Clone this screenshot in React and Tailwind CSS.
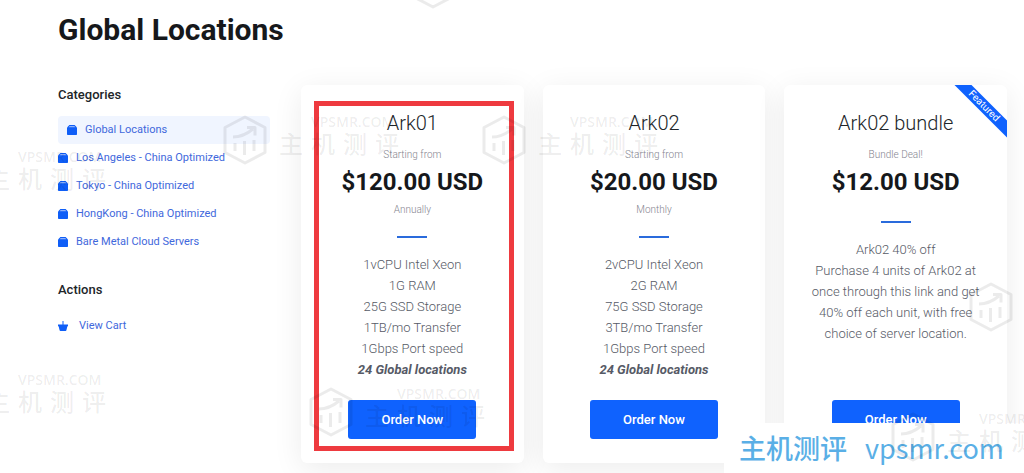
import React from 'react';
import clsx from 'clsx';

const categories = [
    { name: 'Global Locations', active: true },
    { name: 'Los Angeles - China Optimized' },
    { name: 'Tokyo - China Optimized' },
    { name: 'HongKong - China Optimized' },
    { name: 'Bare Metal Cloud Servers' },
];

const plans = [
    {
        name: 'Ark01',
        intro: 'Starting from',
        price: '$120.00 USD',
        cycle: 'Annually',
        features: ['1vCPU Intel Xeon', '1G RAM', '25G SSD Storage', '1TB/mo Transfer', '1Gbps Port speed'],
        note: '24 Global locations',
        marked: true,
    },
    {
        name: 'Ark02',
        intro: 'Starting from',
        price: '$20.00 USD',
        cycle: 'Monthly',
        features: ['2vCPU Intel Xeon', '2G RAM', '75G SSD Storage', '3TB/mo Transfer', '1Gbps Port speed'],
        note: '24 Global locations',
    },
    {
        name: 'Ark02 bundle',
        intro: 'Bundle Deal!',
        price: '$12.00 USD',
        features: ['Ark02 40% off', 'Purchase 4 units of Ark02 at once through this link and get 40% off each unit, with free choice of server location.'],
        featured: true,
    },
];

const watermarks = [
    'left-[410px] -top-[41px]',
    'left-[222px] top-[115px]',
    'left-[481px] top-[115px]',
    '-left-[71px] top-[150px]',
    '-left-[71px] top-[373px]',
    'left-[308px] top-[387px]',
    'left-[968px] top-[282px]',
    'left-[890px] top-[412px]',
];

const BoxIcon = () => (
    <svg viewBox="0 0 10 10" className="w-2.5 h-2.5 shrink-0" aria-hidden="true">
        <path d="M2.4 0h5.200L10 2.400V9.200a.8.8 0 0 1-.8.8H.8a.8.8 0 0 1-.8-.8V2.400z" fill="#0f5ef7" />
        <path d="M2.600 1.100h4.800l.9 1.100H1.700z" fill="#8db0fb" />
    </svg>
);

const BasketIcon = () => (
    <svg viewBox="0 0 10 10" className="w-2.5 h-2.5 shrink-0" aria-hidden="true">
        <path d="M4.500 0h1v4h-1z" fill="#0f5ef7" />
        <path d="M0 3.600h10v1.600h-.6L8.400 9.300a.9.9 0 0 1-.9.7h-5a.9.9 0 0 1-.9-.7L.6 5.200H0z" fill="#0f5ef7" />
    </svg>
);

const Watermark = ({ position }) => (
    <div className={clsx('absolute flex items-start gap-[11px] w-max text-black/8', position)}>
        <svg viewBox="0 0 46 50" className="w-[46px] h-[50px]" fill="none" stroke="currentColor" strokeWidth="3" strokeLinejoin="round">
            <path
                d="M23 2 43 12.500V37.500L23 48 3 37.500V12.500z M11 22c8 0 14-3 20-8M25 12.500h8v8M13 28v8M22.500 26v14M32 25v11"
            />
        </svg>
        <div>
            <p className="pl-8 text-sm leading-3.5 font-semibold font-['Open_Sans',sans-serif]">VPSMR.COM</p>
            <p className="flex gap-2 text-2xl leading-7 font-medium font-['Noto_Sans_CJK_SC',sans-serif]">
                <span>主</span>
                <span>机</span>
                <span>测</span>
                <span>评</span>
            </p>
        </div>
    </div>
);

const Sidebar = () => (
    <aside className="w-[212px] shrink-0 pt-0.5">
        <h2 className="text-[13px] leading-4 font-medium text-[#212529]">Categories</h2>
        <nav className="mt-[13px] flex flex-col">
            {categories.map(({ name, active }) => (
                <a
                    key={name}
                    href="#"
                    className={clsx(
                        'flex items-center gap-2 h-7 text-[11px] text-[#3f68dc]',
                        active && 'bg-[#f0f5ff] rounded-sm px-[9px]'
                    )}
                >
                    <BoxIcon />
                    <span>{name}</span>
                </a>
            ))}
        </nav>

        <h2 className="mt-[26px] text-[13px] leading-4 font-medium text-[#212529]">Actions</h2>
        <a href="#" className="mt-3.5 flex items-center gap-[11px] h-7 text-[11px] text-[#3f68dc]">
            <BasketIcon />
            <span>View Cart</span>
        </a>
    </aside>
);

const PlanCard = ({ plan }) => (
    <article className="relative flex flex-col items-center px-6 pt-6 pb-6 h-[378px] bg-white rounded-md shadow-[0_6px_30px_rgba(0,0,0,0.08)] text-center">
        {plan.marked && (
            <div className="absolute left-[13px] right-[10px] top-4 bottom-3 border-[5px] border-[#ee3a3f] pointer-events-none" />
        )}
        {plan.featured && (
            <div className="absolute inset-0 overflow-hidden rounded-md pointer-events-none">
                <span className="absolute top-[15px] -right-[27px] w-[100px] rotate-45 bg-[#0f62fe] text-white text-[10px] leading-3 text-center">
                    Featured
                </span>
            </div>
        )}
        <h3 className="text-xl leading-7 font-light text-[#212529]">{plan.name}</h3>
        <p className="mt-3 text-[10px] leading-3 font-light text-[#85858f]">{plan.intro}</p>
        <p className="mt-[7px] text-2xl leading-7 font-bold text-[#16181b]">{plan.price}</p>
        {plan.cycle && <p className="mt-2 text-[10px] leading-3 font-light text-[#85858f]">{plan.cycle}</p>}
        <hr className={clsx('w-[30px] border-t-2 border-[#2a6bdc]', plan.cycle ? 'mt-5' : 'mt-[25px]')} />
        <div className="mt-4 text-[13px] leading-[21px] font-light text-[#565a66]">
            {plan.features.map((line) => (
                <p key={line}>{line}</p>
            ))}
            {plan.note && <p className="font-bold italic">{plan.note}</p>}
        </div>
        <button type="button" className="mt-auto w-32 h-[39px] shrink-0 rounded-[3px] bg-[#0f62fe] text-white text-[13px] font-medium">
            Order Now
        </button>
    </article>
);

const App = () => (
    <div className="relative overflow-hidden bg-white pl-[58px] pr-[17px] pt-2.5 pb-2.5 font-[Roboto,sans-serif]">
        <h1 className="text-3xl leading-10 font-bold text-[#16181b]">Global Locations</h1>

        <main className="mt-[35px] flex items-start gap-[31px]">
            <Sidebar />
            <section className="grow grid grid-cols-3 gap-[19px]">
                {plans.map((plan) => (
                    <PlanCard key={plan.name} plan={plan} />
                ))}
            </section>
        </main>

        {/* site badge over the bottom right corner */}
        <div className="absolute right-0 bottom-0 w-[300px] h-[50px] flex items-center gap-[18px] pl-[15px] bg-white text-[#5aafe6] text-[27px] whitespace-nowrap font-['Noto_Sans_CJK_SC',sans-serif]">
            <span className="font-medium">主机测评</span>
            <span>vpsmr.com</span>
        </div>

        <div className="absolute inset-0 overflow-hidden pointer-events-none select-none" aria-hidden="true">
            {watermarks.map((position) => (
                <Watermark key={position} position={position} />
            ))}
        </div>
    </div>
);

export default App;
